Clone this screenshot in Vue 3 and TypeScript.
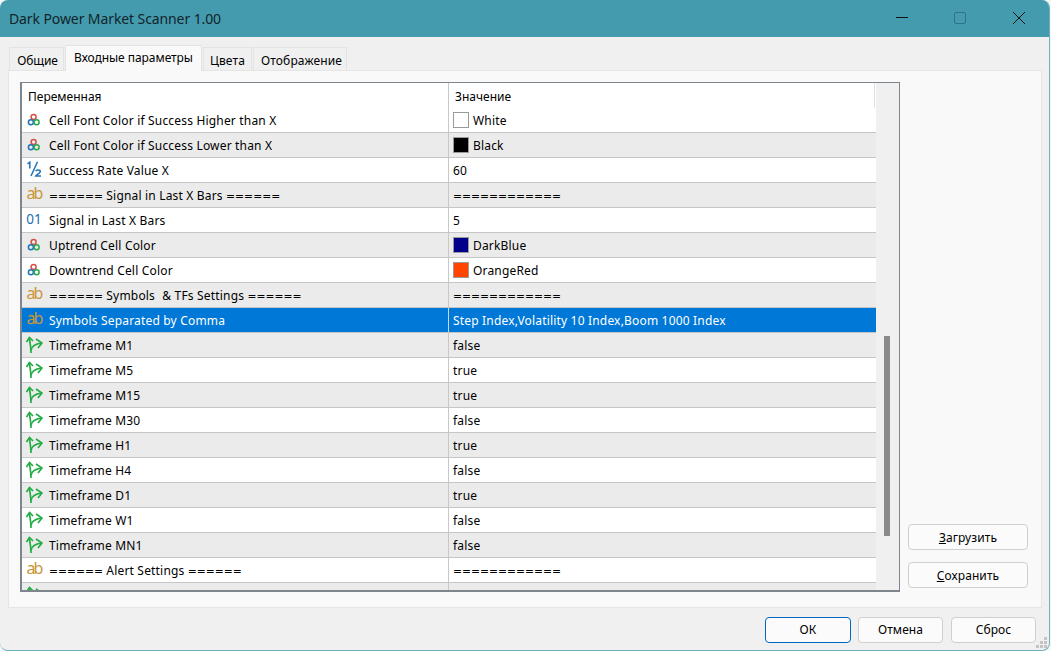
<script setup lang="ts">
interface Row { icon: string; name: string; value: string; swatch?: string; sep?: boolean }
const b = (name: string, value: boolean): Row => ({ icon: 'arrow', name, value: String(value) })
const line = '============'
const rows: Row[] = [
  { icon: 'color', name: 'Cell Font Color if Success Higher than X', value: 'White', swatch: '#ffffff' },
  { icon: 'color', name: 'Cell Font Color if Success Lower than X', value: 'Black', swatch: '#000000' },
  { icon: 'frac', name: 'Success Rate Value X', value: '60' },
  { icon: 'ab', name: '====== Signal in Last X Bars ======', value: line, sep: true },
  { icon: 'int', name: 'Signal in Last X Bars', value: '5' },
  { icon: 'color', name: 'Uptrend Cell Color', value: 'DarkBlue', swatch: '#00008b' },
  { icon: 'color', name: 'Downtrend Cell Color', value: 'OrangeRed', swatch: '#ff4500' },
  { icon: 'ab', name: '====== Symbols & TFs Settings ======', value: line, sep: true },
  { icon: 'ab', name: 'Symbols Separated by Comma', value: 'Step Index,Volatility 10 Index,Boom 1000 Index' },
  b('Timeframe M1', false),
  b('Timeframe M5', true),
  b('Timeframe M15', true),
  b('Timeframe M30', false),
  b('Timeframe H1', true),
  b('Timeframe H4', false),
  b('Timeframe D1', true),
  b('Timeframe W1', false),
  b('Timeframe MN1', false),
  { icon: 'ab', name: '====== Alert Settings ======', value: line, sep: true },
  { icon: 'arrow', name: '', value: '' },
]
const tabs = ['Общие', 'Входные параметры', 'Цвета', 'Отображение']
const selected = 8
const parts = (s: string): string[] => s.split(/(=+|&)/).filter((p) => p.length > 0)
const partClass = (p: string) => ({ eq: p[0] === '=', amp: p === '&' })
</script>

<template>
  <div class="window">
    <header class="titlebar">
      <span class="title">Dark Power Market Scanner 1.00</span>
      <div class="controls">
        <svg width="14" height="14" viewBox="0 0 14 14"><path d="M2 5.5H14" stroke="#111" fill="none" /></svg>
        <svg width="14" height="14" viewBox="0 0 14 14"><rect x="1.5" y="0.5" width="11" height="11" rx="1.5" stroke="#2f7485" fill="none" /></svg>
        <svg width="14" height="14" viewBox="0 0 14 14"><path d="M1 0L13 12M13 0L1 12" stroke="#111" fill="none" /></svg>
      </div>
    </header>

    <div class="content">
      <nav class="tabs">
        <div v-for="(t, i) in tabs" :key="t" class="tab" :class="['tab' + i, { active: i === 1 }]">{{ t }}</div>
      </nav>

      <section class="panel">
        <div class="table">
          <div class="list">
            <div class="thead">
              <div class="c1">Переменная</div>
              <div class="c2">Значение</div>
            </div>
            <div
              v-for="(r, i) in rows"
              :key="i"
              class="row"
              :class="{ alt: i % 2 === 1, sel: i === selected }"
            >
              <div class="name">
                <span class="icon">
                  <svg v-if="r.icon === 'color'" width="16" height="16" viewBox="0 0 16 16" fill="none" stroke-width="1.5">
                    <circle cx="7.6" cy="5" r="2.5" stroke="#d6504a" />
                    <circle cx="4.9" cy="10.3" r="2.5" stroke="#1f74c0" />
                    <circle cx="10.6" cy="10.3" r="2.5" stroke="#2aa84a" />
                  </svg>
                  <svg v-else-if="r.icon === 'frac'" class="frac" width="16" height="16" viewBox="0 0 16 16" fill="none" stroke="#1f74b8" stroke-width="1.5">
                    <path d="M1.5 2.8L3.8 1.2V7.6" />
                    <path d="M11.5 0.8L5 15" />
                    <path d="M9.8 10.3C10.3 8.6 14.3 8.6 14.3 10.6C14.3 12.2 11 13.2 9.8 15H15" />
                  </svg>
                  <span v-else-if="r.icon === 'ab'" class="ab">ab</span>
                  <span v-else-if="r.icon === 'int'" class="int">01</span>
                  <svg v-else width="18" height="18" viewBox="0 0 18 18" fill="none" stroke="#22ad44" stroke-width="1.7">
                    <path d="M4.5 1.5C4.5 6 6 9 6 17" />
                    <path d="M6 14.5C6.5 10.5 10 8 16.5 7" />
                    <path d="M1.5 6L4.5 1.5L8 5" />
                    <path d="M11 3L17 7L13 12" />
                  </svg>
                </span>
                <span><span v-for="(p, k) in parts(r.name)" :key="k" :class="partClass(p)">{{ p }}</span></span>
              </div>
              <div class="val">
                <span v-if="r.swatch" class="swatch" :style="{ background: r.swatch }"></span>
                <span><span v-for="(p, k) in parts(r.value)" :key="k" :class="partClass(p)">{{ p }}</span></span>
              </div>
            </div>
          </div>
          <div class="scroll"><div class="thumb"></div></div>
        </div>

        <aside class="side">
          <button class="btn side-btn"><u>З</u>агрузить</button>
          <button class="btn side-btn"><u>С</u>охранить</button>
        </aside>
      </section>

      <footer class="footer">
        <button class="btn foot-btn ok">ОК</button>
        <button class="btn foot-btn">Отмена</button>
        <button class="btn foot-btn last">Сброс</button>
      </footer>
    </div>

    <svg class="grip" width="12" height="12" viewBox="0 0 12 12" fill="#c4c4c4">
      <rect x="8" y="0" width="3" height="3" />
      <rect x="4" y="4" width="3" height="3" />
      <rect x="8" y="4" width="3" height="3" />
      <rect x="0" y="8" width="3" height="3" />
      <rect x="4" y="8" width="3" height="3" />
      <rect x="8" y="8" width="3" height="3" />
    </svg>
  </div>
</template>

<style>
html, body { margin: 0; background: #f4f7f8; overflow: hidden; }
</style>

<style scoped>
.window {
  position: relative;
  width: 1050px;
  height: 651px;
  box-sizing: border-box;
  background: #f0f0f0;
  border-radius: 8px;
  border-right: 1px solid #6fb0bf;
  border-bottom: 1px solid #6fb0bf;
  overflow: hidden;
  font-family: "Noto Sans", "Open Sans", sans-serif;
  font-size: 12px;
  color: #000;
}
.titlebar {
  height: 37px;
  background: #459bae;
  display: flex;
  align-items: center;
  justify-content: space-between;
  padding-left: 9px;
}
.title { font-size: 14px; color: #10242a; letter-spacing: -0.1px; }
.controls { display: flex; gap: 45px; margin-right: 23px; }
.content { padding: 8px 8px 0 8px; }
.tabs { display: flex; align-items: flex-end; height: 25px; padding-left: 1px; gap: 1px; }
.tab {
  box-sizing: border-box;
  height: 23px;
  margin-bottom: 0;
  background: #f0f0f0;
  border: 1px solid #e3e3e3;
  border-bottom: none;
  display: flex;
  align-items: center;
  justify-content: center;
  letter-spacing: 0.15px;
  padding-top: 2px;
}
.tab0 { width: 55px; letter-spacing: -0.1px; padding-left: 2px; }
.tab1 { width: 137px; }
.tab2 { width: 49px; }
.tab3 { width: 94px; padding-left: 3px; }
.tab.active {
  height: 26px;
  background: #f9f9f9;
  margin-bottom: -1px;
  position: relative;
  z-index: 1;
  padding-top: 0;
  padding-bottom: 3px;
  letter-spacing: -0.05px;
}
.panel {
  box-sizing: border-box;
  width: 1034px;
  height: 538px;
  background: #f9f9f9;
  border: 1px solid #e5e5e5;
  padding: 11px 11px 0 11px;
  display: flex;
  justify-content: space-between;
}
.table {
  box-sizing: border-box;
  width: 880px;
  height: 510px;
  border: 1px solid #7f858c;
  border-width: 1px 1px 2px 2px;
  background: #f0f0f0;
  display: flex;
  overflow: hidden;
}
.list { width: 854px; background: #fff; flex: none; }
.thead { display: flex; height: 25px; align-items: center; }
.c1 { width: 427px; padding-left: 6px; box-sizing: border-box; border-right: 1px solid #c8c8c8; height: 25px; line-height: 27px; }
.c2 { flex: 1; box-sizing: border-box; padding-left: 6px; line-height: 27px; height: 25px; border-right: 1px solid #e2e2e2; margin-right: 1px; }
.row {
  display: flex;
  box-sizing: border-box;
  height: 25px;
  border-bottom: 1px solid #c6c6c6;
  background: #fff;
  align-items: center;
  letter-spacing: 0.18px;
}
.row.alt { background: #ebebeb; }
.row.sel { background: #0078d7; color: #fff; }
.name {
  box-sizing: border-box;
  width: 427px;
  height: 24px;
  display: flex;
  align-items: center;
  border-right: 1px solid #c8c8c8;
  white-space: nowrap;
}
.row.sel .name { border-right-color: #c8d8e8; }
.icon {
  width: 24px;
  height: 24px;
  margin-right: 3px;
  flex: none;
  display: flex;
  align-items: center;
  justify-content: center;
}
.frac { margin-top: -2px; }
.ab { color: #c9963a; font-size: 16px; line-height: 16px; letter-spacing: -1.8px; margin-top: -4px; }
.int { color: #1a6fb0; font-size: 13.5px; line-height: 16px; letter-spacing: 0; margin-top: -2px; }
.eq { font-family: "DejaVu Sans", sans-serif; font-size: 10.75px; letter-spacing: 0; }
.amp { margin-left: 4px; }
.val { display: flex; align-items: center; padding-left: 4px; white-space: nowrap; }
.swatch {
  width: 14px;
  height: 14px;
  border: 1px solid #9a9a9a;
  margin: -1px 4px 0 0;
  flex: none;
}
.scroll { flex: 1; position: relative; background: #f0f0f0; }
.thumb {
  position: absolute;
  left: 8px;
  top: 253px;
  width: 6px;
  height: 200px;
  background: #8a8a8a;
}
.side {
  width: 120px;
  display: flex;
  flex-direction: column;
  gap: 12px;
  padding-top: 442px;
  margin-right: 2px;
}
.btn {
  box-sizing: border-box;
  font: inherit;
  letter-spacing: 0.1px;
  background: #fbfbfb;
  border: 1px solid #cfcfcf;
  border-radius: 4px;
  color: #000;
  padding: 0;
}
.side-btn { width: 120px; height: 26px; }
.footer { display: flex; justify-content: flex-end; gap: 7px; padding: 9px 5px 0 0; }
.foot-btn { width: 85px; height: 26px; padding-bottom: 2px; }
.ok { width: 86px; border: 1px solid #0067c0; }
.last { margin-left: 1px; }
.grip { position: absolute; right: 1px; bottom: 1px; }
</style>
